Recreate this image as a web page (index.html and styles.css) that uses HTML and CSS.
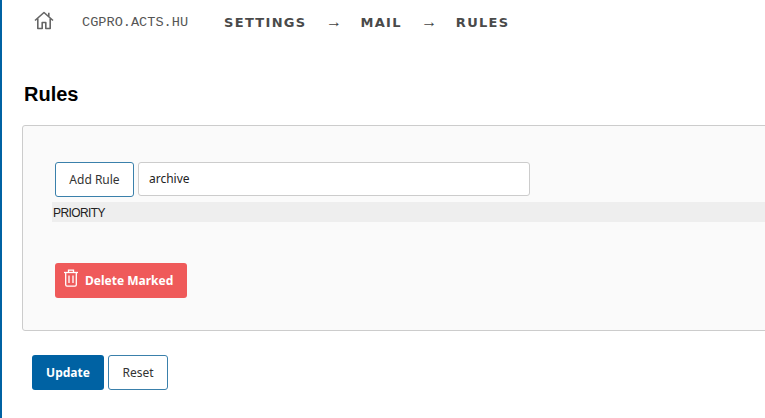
FILE: index.html
```html
<!DOCTYPE html>
<html lang="en">
<head>
<meta charset="utf-8">
<title>Rules</title>
<link rel="stylesheet" href="styles.css">
</head>
<body>
<div class="page">
  <nav class="crumbs">
    <a class="home" href="#" aria-label="Home">
      <svg width="20" height="19" viewBox="0 0 20 19" fill="none" stroke="#666" stroke-width="1.6" stroke-linejoin="round">
        <path d="M1 9.5 10 1.5l9 8"/>
        <path d="M3.8 7.5v10h4.4v-6h3.6v6h4.4v-10"/>
        <path d="M14.8 1.8v3.6" />
      </svg>
    </a>
    <span class="host">CGPRO.ACTS.HU</span>
    <span class="trail">SETTINGS</span>
    <span class="arrow">→</span>
    <span class="trail">MAIL</span>
    <span class="arrow">→</span>
    <span class="trail">RULES</span>
  </nav>
  <h1 class="title">Rules</h1>
  <section class="panel">
    <div class="add-row">
      <button class="btn btn-outline btn-add" type="button">Add Rule</button>
      <input class="text-input" type="text" value="archive">
    </div>
    <div class="table-head">PRIORITY</div>
    <button class="btn btn-danger" type="button">
      <svg width="14" height="18" viewBox="0 0 14 18" fill="none" stroke="#fff" stroke-width="1.3">
        <path d="M0 3.5h14"/>
        <path d="M4.5 3.5V1.2h5v2.3"/>
        <path d="M1.7 3.5v12.3c0 .8.5 1.3 1.3 1.3h8c.8 0 1.3-.5 1.3-1.3V3.5"/>
        <path d="M5 6.5v7.5M9 6.5v7.5"/>
      </svg>
      <span>Delete Marked</span>
    </button>
  </section>
  <div class="actions">
    <button class="btn btn-primary" type="button">Update</button>
    <button class="btn btn-outline btn-reset" type="button">Reset</button>
  </div>
</div>
</body>
</html>
```
FILE: styles.css
```css
html, body {
  margin: 0;
  padding: 0;
  background: #fff;
  overflow: hidden;
}
.page {
  width: 763px;
  height: 418px;
  overflow: hidden;
  border-left: 2px solid #0062a3;
  font-family: "Noto Sans", sans-serif;
}
.crumbs {
  display: flex;
  align-items: center;
  height: 44px;
  padding-left: 32px;
}
.home {
  display: flex;
  width: 20px;
  height: 19px;
  margin-top: -4px;
}
.host {
  margin-left: 28px;
  font-family: "Liberation Mono", monospace;
  font-size: 13.6px;
  color: #555;
}
.trail {
  font-family: "DejaVu Sans", sans-serif;
  font-size: 13px;
  font-weight: 700;
  letter-spacing: 1.3px;
  color: #4a4a4a;
}
.host + .trail {
  margin-left: 36px;
}
.arrow {
  margin: -3px 18.5px 0 19.5px;
  font-family: "Noto Sans", sans-serif;
  font-size: 16px;
  color: #444;
}
.title {
  margin: 36px 0 17px 22px;
  font-family: "Liberation Sans", sans-serif;
  font-size: 20px;
  line-height: 28px;
  font-weight: 700;
  color: #000;
}
.panel {
  box-sizing: border-box;
  width: 760px;
  height: 206px;
  margin-left: 20px;
  padding: 36px 0 0 32px;
  background: #fafafa;
  border: 1px solid #ccc;
  border-radius: 3px;
}
.add-row {
  display: flex;
  gap: 4px;
  height: 35px;
}
.btn {
  box-sizing: border-box;
  height: 35px;
  padding: 0;
  border-radius: 3px;
  font-family: "Noto Sans", sans-serif;
  font-size: 12px;
}
.btn-outline {
  background: #fff;
  border: 1px solid #3a80ab;
  color: #333;
}
.btn-add {
  width: 79px;
}
.text-input {
  box-sizing: border-box;
  width: 392px;
  height: 34px;
  padding: 0 9px 2px 10px;
  background: #fff;
  border: 1px solid #ccc;
  border-radius: 3px;
  font-family: "Noto Sans", sans-serif;
  font-size: 12px;
  color: #222;
  outline: none;
}
.table-head {
  height: 20px;
  margin: 5px 0 41px -3px;
  padding-left: 1px;
  background: #eee;
  font-family: "Liberation Sans", sans-serif;
  font-size: 12px;
  letter-spacing: -0.6px;
  line-height: 22px;
  color: #222;
}
.btn-danger {
  display: flex;
  align-items: center;
  gap: 7px;
  width: 132px;
  padding-left: 9px;
  background: #ef5a5a;
  border: 0;
  color: #fff;
  font-weight: 700;
}
.btn-danger svg {
  margin-top: -5px;
}
.actions {
  display: flex;
  gap: 4px;
  margin: 24px 0 0 30px;
}
.btn-primary {
  width: 72px;
  background: #0062a3;
  border: 0;
  color: #fff;
  font-weight: 700;
}
.btn-reset {
  width: 60px;
}
```
